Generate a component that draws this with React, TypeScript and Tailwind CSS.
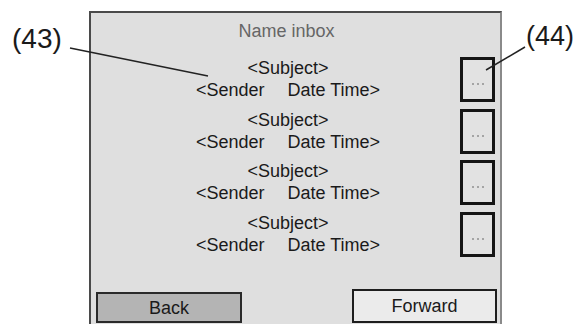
const rows = [1, 2, 3, 4];

function MoreButton() {
  return (
    <div className="w-[35px] h-[45px] border-[3px] border-[#151515] bg-[#e2e2e2] flex items-center justify-center pt-[9px]">
      <div className="flex gap-[3px]">
        <span className="w-[2px] h-[2px] rounded-full bg-[#8f8f8f]" />
        <span className="w-[2px] h-[2px] rounded-full bg-[#8f8f8f]" />
        <span className="w-[2px] h-[2px] rounded-full bg-[#8f8f8f]" />
      </div>
    </div>
  );
}

function MessageRow() {
  return (
    <div className="flex h-[45px]">
      <div className="flex-1 pl-[20px] text-center text-[18px] leading-[22px] text-[#1a1a1a]">
        <div>&lt;Subject&gt;</div>
        <div>
          <span className="mr-[23px]">&lt;Sender</span>Date Time&gt;
        </div>
      </div>
      <MoreButton />
    </div>
  );
}

export default function App() {
  return (
    <div
      className="relative w-[579px] h-[324px] overflow-hidden bg-white"
      style={{ fontFamily: '"Liberation Sans", Arial, sans-serif' }}
    >
      <div className="ml-[89px] mt-[11px] w-[413px] h-[330px] border-2 border-[#4a4a4a] border-r-[#8a8a8a] bg-[#dfdfdf] pl-[5px] pr-[3px]">
        <div className="pt-[8px] pr-[20px] text-center text-[18px] leading-[20px] text-[#666]">
          Name inbox
        </div>
        <div className="mt-[16px] pr-[2px] flex flex-col gap-[6.5px]">
          {rows.map((r) => (
            <MessageRow key={r} />
          ))}
        </div>
        <div className="mt-[32.5px] flex items-end justify-between">
          <button className="w-[146px] h-[31px] border-2 border-[#2a2a2a] bg-[#b4b4b4] text-[18px] leading-none text-[#1a1a1a]">
            Back
          </button>
          <button className="w-[145px] h-[34px] border-2 border-[#1e1e1e] bg-[#ebebeb] text-[18px] leading-none text-[#1a1a1a]">
            Forward
          </button>
        </div>
      </div>

      {/* reference labels */}
      <div className="absolute left-[12px] top-[25px] text-[28px] leading-[28px] text-[#1a1a1a]">(43)</div>
      <div className="absolute left-[526px] top-[22px] text-[27px] leading-[28px] text-[#1a1a1a]">(44)</div>
      <svg className="absolute inset-0 pointer-events-none" width="579" height="324">
        <line x1="70" y1="48" x2="208" y2="76" stroke="#222" strokeWidth="1.5" />
        <line x1="525" y1="47" x2="486" y2="70" stroke="#222" strokeWidth="1.5" />
      </svg>
    </div>
  );
}
